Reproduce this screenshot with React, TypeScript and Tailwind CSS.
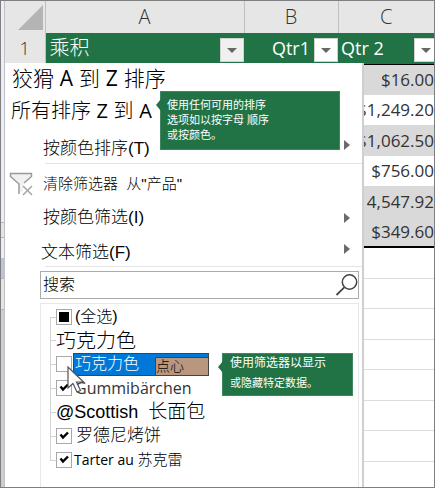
import React, { useState } from 'react';

const latin = "font-['Open_Sans','Noto_Sans_CJK_SC',sans-serif]";
const cjk = "font-['Liberation_Sans','Noto_Sans_CJK_SC',sans-serif]";

const amounts = ['$16.00', '$1,249.20', '$1,062.50', '$756.00', '4,547.92', '$349.60'];
const emptyRows = [8, 9, 10, 11, 12, 13, 14];

const FilterButton: React.FC<{ label: string; pressed?: boolean }> = ({ label, pressed }) => (
  <button
    aria-label={label}
    className={`flex h-6 w-6 shrink-0 items-center justify-center border border-[#d0d0d0] ${pressed ? 'bg-[#f0f0f0]' : 'bg-white'}`}
  >
    <svg width="10" height="5" viewBox="0 0 10 5" aria-hidden="true">
      <path d="M0 0h10L5 5z" fill="#666" />
    </svg>
  </button>
);

const MenuArrow: React.FC = () => (
  <svg className="shrink-0" width="6" height="10" viewBox="0 0 6 10" aria-hidden="true">
    <path d="M0 0l6 5-6 5z" fill="#6b6b6b" />
  </svg>
);

const ClearFilterIcon: React.FC = () => (
  <svg className="shrink-0" width="24" height="24" viewBox="0 0 24 24" fill="none" aria-hidden="true">
    <path d="M1.500 1.500h21v3L14 12v9.500l-4-3V12L1.500 4.500z" fill="#f1f1f1" />
    <path d="M10 22V12L1.500 4.500v-3h21v3L15 11" stroke="#9a9a9a" strokeWidth="1.500" />
    <path d="M14 14l9 9M23 14l-9 9" stroke="#a6a6a6" strokeWidth="1.500" />
  </svg>
);

const SearchIcon: React.FC = () => (
  <svg className="shrink-0" width="24" height="24" viewBox="0 0 24 24" fill="none" aria-hidden="true">
    <circle cx="15.500" cy="9" r="7.200" stroke="#444" strokeWidth="1.500" />
    <path d="M10.300 14.300L2.500 22" stroke="#444" strokeWidth="1.800" />
  </svg>
);

const Cursor: React.FC = () => (
  <svg className="pointer-events-none absolute left-[17px] top-[61px]" width="18" height="28" viewBox="0 0 18 28" aria-hidden="true">
    <path d="M1 1v21l5-4.500 4 8.500 3.500-1.500-4-8.500h7z" fill="#fff" stroke="#555" strokeWidth="1.200" />
  </svg>
);

const Callout: React.FC<{ className: string; children: React.ReactNode }> = ({ className, children }) => (
  <div role="note" className={`absolute border border-[#3f8560] bg-[#217346] text-white ${className}`}>
    <svg className="absolute -left-[5px] top-[7px]" width="5" height="12" viewBox="0 0 5 12" aria-hidden="true">
      <path d="M5 0v12L0 6z" fill="#217346" />
    </svg>
    {children}
  </div>
);

interface TreeItemProps {
  checked: boolean;
  mixed?: boolean;
  onChange: () => void;
  className?: string;
  children: React.ReactNode;
}

const TreeItem: React.FC<TreeItemProps> = ({ checked, mixed, onChange, className = 'ml-1', children }) => (
  <label className="flex h-6 items-center">
    <span className="w-1.5 border-t border-[#d4d4d4]" />
    <span className="relative flex h-4 w-4 shrink-0">
      <input
        type="checkbox"
        checked={checked}
        onChange={onChange}
        className="h-4 w-4 appearance-none border border-[#a8a8a8] bg-white"
      />
      <svg className="pointer-events-none absolute left-0 top-0" width="16" height="16" viewBox="0 0 16 16" fill="none" aria-hidden="true">
        {mixed && <path d="M3 3h10v10H3z" fill="#000" />}
        {!mixed && checked && <path d="M4.500 6.500l2.500 3 5-5" stroke="#000" strokeWidth="2.400" />}
      </svg>
    </span>
    <span className={`whitespace-pre ${className}`}>{children}</span>
  </label>
);

const TreeText: React.FC<{ className: string; children: React.ReactNode }> = ({ className, children }) => (
  <div className={`flex items-center whitespace-pre ${className}`}>
    <span className="w-1.5 shrink-0 border-t border-[#d4d4d4]" />
    {children}
  </div>
);

export default function App() {
  const [search, setSearch] = useState('');
  const [checked, setChecked] = useState({ all: true, snack: false, gummi: true, rodney: true, tart: true });

  const toggle = (key: keyof typeof checked) => {
    setChecked(prev => ({ ...prev, [key]: !prev[key] }));
  };

  return (
    <div className={`relative flex overflow-hidden border border-[#7f7f7f] bg-white text-black ${latin}`}>
      {/* edge of the window behind the sheet */}
      <div className="flex w-1 shrink-0 flex-col border-r border-[#c0c0cc]">
        <div className="h-[221px] bg-[#eceef6]" />
        <div className="h-4 border-y border-[#b8b4b4] bg-[#e6e3e1]" />
        <div className="h-5 bg-[#eceff8]" />
        <div className="h-5 bg-[#b9c4d4]" />
        <div className="h-8 border-y border-[#b8b4b4] bg-[#e6e3e1]" />
        <div className="flex-1 bg-[#cfcccb]" />
      </div>

      <table className="w-full table-fixed border-collapse text-[#333]">
        <colgroup>
          <col className="w-10" />
          <col className="w-[199px]" />
          <col className="w-[94px]" />
          <col />
        </colgroup>
        <thead>
          <tr className="h-8 bg-[#e6e6e6] text-xl leading-6">
            <th className="border-r border-[#c0c0c0] p-0">
              <svg className="ml-auto mr-0.5" width="25" height="25" viewBox="0 0 25 25" aria-hidden="true">
                <path d="M25 0v25H0z" fill="#b4b4b4" />
              </svg>
            </th>
            <th className="border-r border-[#c0c0c0] p-0 font-light">A</th>
            <th className="border-r border-[#c0c0c0] p-0 font-light">B</th>
            <th className="p-0 font-light">C</th>
          </tr>
        </thead>
        <tbody className="text-[17px]">
          <tr className="h-[31px] border-b border-black bg-[#217346] text-lg text-white">
            <th className="border-r border-[#c0c0c0] bg-[#e6e6e6] p-0 font-light leading-6 text-[#333]">1</th>
            <td className="p-0">
              <div className="flex items-end justify-between pl-1">
                <span className="text-xl font-light leading-7">乘积</span>
                <FilterButton label="筛选 乘积" pressed />
              </div>
            </td>
            <td className="p-0">
              <div className="flex items-end justify-end gap-1">
                <span className="leading-7">Qtr1</span>
                <FilterButton label="筛选 Qtr1" />
              </div>
            </td>
            <td className="p-0">
              <div className="-mr-1 flex items-end justify-between pl-[3px]">
                <span className="whitespace-nowrap leading-7">Qtr 2</span>
                <FilterButton label="筛选 Qtr 2" />
              </div>
            </td>
          </tr>
          {amounts.map((amount, i) => (
            <tr
              key={amount}
              className={`${i === 5 ? 'border-b-2 border-black' : ''} ${i % 2 ? 'h-[30px]' : 'h-[31px]'} ${i === 1 || i === 3 ? 'bg-white' : 'bg-[#d9d9d9]'}`}
            >
              <td className="p-0" colSpan={3} />
              <td className="p-0">
                <div className="flex justify-end leading-6">{amount}</div>
              </td>
            </tr>
          ))}
          {emptyRows.map(row => (
            <tr key={row} className={`border-b border-[#dcdcdc] ${row % 2 ? 'h-[30px]' : 'h-[31px]'}`}>
              <td className="p-0" colSpan={4} />
            </tr>
          ))}
          <tr className="h-[26px]">
            <td className="p-0" colSpan={4} />
          </tr>
        </tbody>
      </table>

      <div className={`absolute bottom-0 left-1 top-[62px] flex w-[359px] flex-col border-r-2 border-[#cfcfcf] bg-white ${cjk}`}>
        <button className="h-8 whitespace-nowrap pl-[7px] text-left text-[21px] font-light">
          狡猾 <span className={`font-medium ${latin}`}>A</span> 到 <span className={`font-medium ${latin}`}>Z</span> 排序
        </button>
        <button className="h-8 whitespace-nowrap pl-1.5 text-left text-xl font-light">
          所有排序 <span className={`font-medium ${latin}`}>Z</span> 到 <span className={`font-medium ${latin}`}>A</span>
        </button>
        <button className="ml-[38px] mr-3 flex h-9 items-center justify-between text-[17px] font-light">
          <span className="pt-2">按颜色排序(T)</span>
          <MenuArrow />
        </button>
        <hr className="ml-10 border-[#e4e4e4]" />
        <button className="flex h-10 items-center pl-1 text-left text-[15px] font-light">
          <ClearFilterIcon />
          <span className="ml-2.5 whitespace-pre">清除筛选器  从"产品"</span>
        </button>
        <button className="ml-[38px] mr-3 flex h-7 items-center justify-between text-[17px] font-light">
          按颜色筛选(I)
          <MenuArrow />
        </button>
        <button className="ml-[36px] mr-3 flex h-[34px] items-center justify-between text-[17px] font-light">
          <span className="pt-2">文本筛选(F)</span>
          <MenuArrow />
        </button>
        <hr className="ml-10 border-[#e4e4e4]" />
        <div className="ml-[35px] mr-[3px] mt-1 flex h-7 items-center border border-[#ababab]">
          <input
            type="text"
            aria-label="搜索"
            placeholder="搜索"
            value={search}
            onChange={e => setSearch(e.target.value)}
            className="min-w-0 flex-1 pl-0.5 text-base font-light outline-none placeholder:text-black"
          />
          <SearchIcon />
        </div>

        <div className="ml-[35px] mr-[3px] mt-1 flex-1 border border-b-0 border-[#e8e8e8] pl-[9px] pt-px">
          <div className="relative flex flex-col">
            <div className="absolute bottom-3 left-0 top-3 border-l border-[#d4d4d4]" />
            <TreeItem checked={checked.all} mixed onChange={() => toggle('all')} className="ml-[3px] text-base font-light">
              (全选)
            </TreeItem>
            <TreeText className="h-[23px] text-xl font-light">巧克力色</TreeText>
            <TreeItem checked={checked.snack} onChange={() => toggle('snack')} className="ml-px">
              <span className="flex h-[23px] w-[136px] items-center justify-between border border-[#444] bg-[#0078d7] text-base font-light text-white">
                <span className="pl-px">巧克力色</span>
                <span className="flex h-[18px] w-[53px] items-center self-end border-l border-t border-[#444] bg-[#b8977e] text-sm text-black">点心</span>
              </span>
            </TreeItem>
            <TreeItem checked={checked.gummi} onChange={() => toggle('gummi')} className={`ml-[3px] text-base text-[#333] ${latin}`}>
              Gummibärchen
            </TreeItem>
            <TreeText className="h-6 text-lg">
              @Scottish  <span className="text-[19px] font-light">长面包</span>
            </TreeText>
            <TreeItem checked={checked.rodney} onChange={() => toggle('rodney')} className="ml-1 text-[17px] font-light">
              罗德尼烤饼
            </TreeItem>
            <TreeItem checked={checked.tart} onChange={() => toggle('tart')} className={`ml-0.5 text-sm ${latin}`}>
              Tarter au <span className="text-[15px] font-light">苏克雷</span>
            </TreeItem>
            <Cursor />
          </div>
        </div>

        <Callout className="left-[155px] top-7 w-[180px] px-1.5 py-1.5 text-[11px] leading-[15px]">
          使用任何可用的排序
          <br />
          选项如以按字母 顺序
          <br />
          或按颜色。
        </Callout>
        <Callout className="left-[217px] top-[290px] w-[131px] px-[7px] pb-1 pt-px text-[11px]">
          <div className="text-xs leading-4">使用筛选器以显示</div>
          <div className="pt-1 leading-4">或隐藏特定数据。</div>
        </Callout>
      </div>
    </div>
  );
}
